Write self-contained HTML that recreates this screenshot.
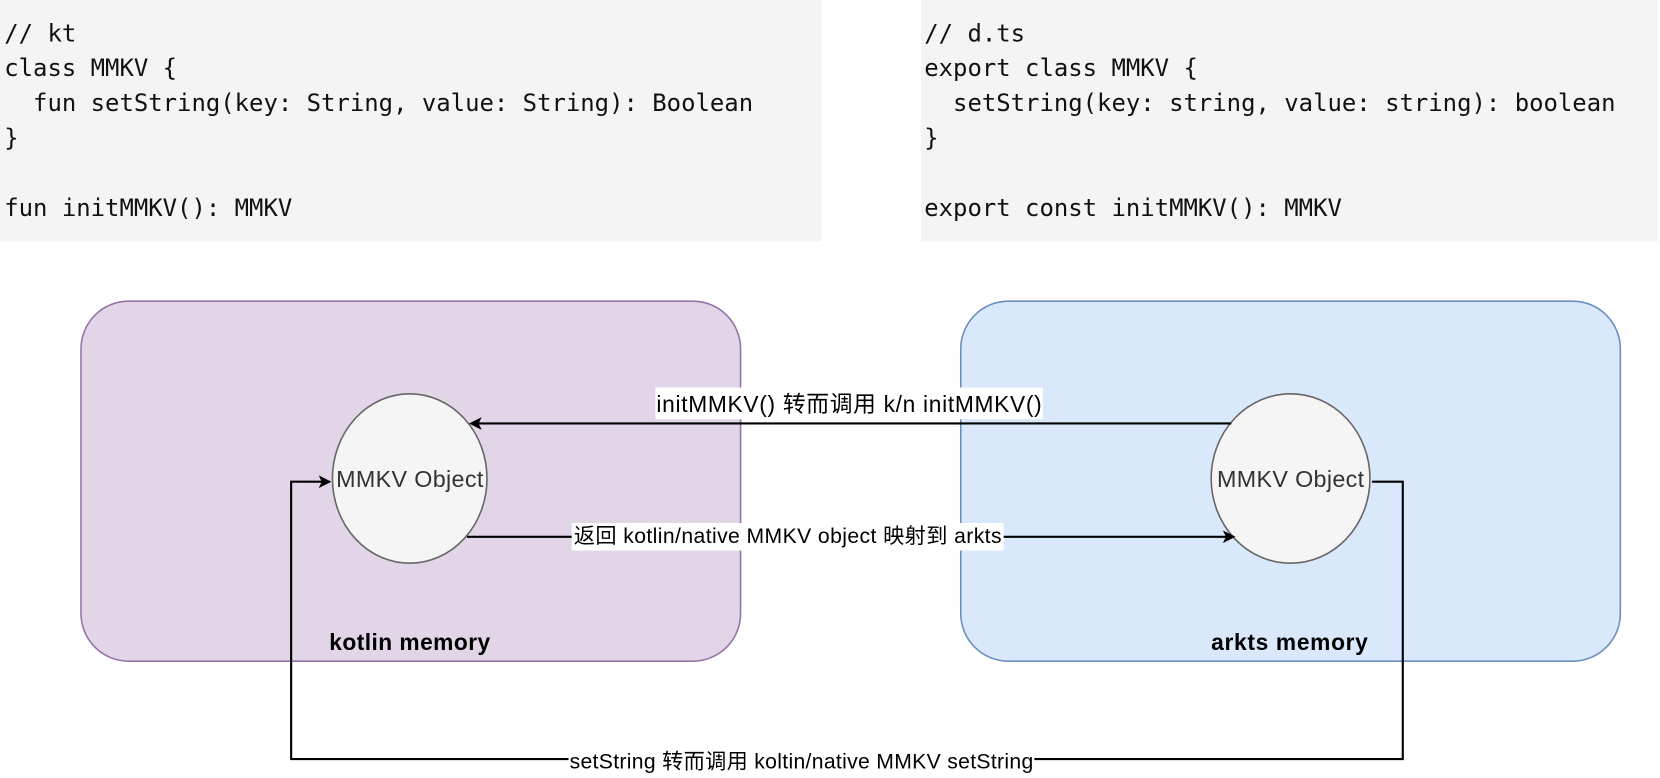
<!DOCTYPE html>
<html><head><meta charset="utf-8"><style>
body{margin:0;width:1660px;height:778px;background:#fff;position:relative;overflow:hidden;font-family:"Liberation Sans","Noto Sans CJK SC",sans-serif}
#w{position:absolute;left:0;top:0;width:1568px;height:735px;transform:scale(1.0587);transform-origin:0 0}
.code{position:absolute;top:0;height:228px;background:#f4f4f4;font-family:"DejaVu Sans Mono","Liberation Mono",monospace;font-size:22.6px;line-height:33px;white-space:pre;color:#111;padding-top:16px;box-sizing:border-box;padding-left:4px}
</style></head><body><div id="w">
<div class="code" style="left:0;width:776px">// kt
class MMKV {
  fun setString(key: String, value: String): Boolean
}

fun initMMKV(): MMKV</div>
<div class="code" style="left:870px;width:696px;padding-left:3px">// d.ts
export class MMKV {
  setString(key: string, value: string): boolean
}

export const initMMKV(): MMKV</div>
<svg width="1568" height="735" style="position:absolute;left:0;top:0" font-family="Liberation Sans, Noto Sans CJK SC, sans-serif">
<defs><marker id="a" markerWidth="12" markerHeight="12" refX="10" refY="6" orient="auto" markerUnits="userSpaceOnUse"><path d="M0,0 L12,6 L0,12 L3,6 Z" fill="#000"/></marker></defs>
<rect x="76.5" y="284.5" width="623" height="340" rx="45" fill="#e1d5e7" stroke="#9673a6" stroke-width="1.5"/>
<rect x="907.5" y="284.5" width="623" height="340" rx="45" fill="#dae8fc" stroke="#6c8ebf" stroke-width="1.5"/>
<ellipse cx="387" cy="452" rx="73" ry="80" fill="#f5f5f5" stroke="#666" stroke-width="1.5"/>
<ellipse cx="1219" cy="452" rx="75" ry="80" fill="#f5f5f5" stroke="#666" stroke-width="1.5"/>
<text x="387" y="460" font-size="22" fill="#333" text-anchor="middle" textLength="139">MMKV Object</text>
<text x="1219" y="460" font-size="22" fill="#333" text-anchor="middle" textLength="139">MMKV Object</text>
<text x="387" y="614" font-size="21.5" font-weight="bold" text-anchor="middle" textLength="152">kotlin memory</text>
<text x="1218" y="614" font-size="21.5" font-weight="bold" text-anchor="middle" textLength="148">arkts memory</text>
<line x1="1163" y1="400" x2="445" y2="400" stroke="#000" stroke-width="2" marker-end="url(#a)"/>
<line x1="441" y1="507" x2="1165" y2="507" stroke="#000" stroke-width="2" marker-end="url(#a)"/>
<polyline points="1296,455 1325,455 1325,717 275,717 275,455 311,455" fill="none" stroke="#000" stroke-width="2" marker-end="url(#a)"/>
<rect x="619" y="366" width="366" height="30" fill="#fff"/>
<text x="802" y="389" font-size="21.5" text-anchor="middle" textLength="364">initMMKV() 转而调用 k/n initMMKV()</text>
<rect x="540" y="494" width="408" height="26" fill="#fff"/>
<text x="744" y="513" font-size="20" text-anchor="middle" textLength="404">返回 kotlin/native MMKV object 映射到 arkts</text>
<rect x="537" y="707" width="440" height="26" fill="#fff"/>
<text x="757" y="726" font-size="20" text-anchor="middle" textLength="438">setString 转而调用 koltin/native MMKV setString</text>
</svg>
</div></body></html>
